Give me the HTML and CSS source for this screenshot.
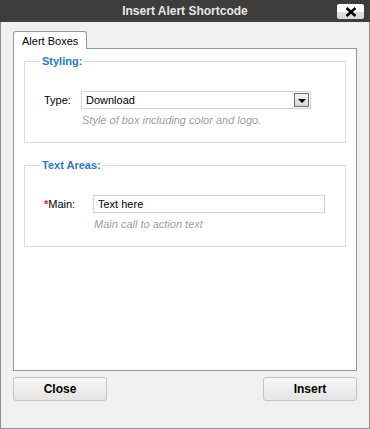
FILE: index.html
```html
<!DOCTYPE html>
<html lang="en">
<head>
    <meta charset="UTF-8">
    <title>Insert Alert Shortcode</title>
    <link rel="stylesheet" href="styles.css">
</head>
<body>
    <div class="dialog">
        <div class="titlebar">
            <span></span>
            <span class="title">Insert Alert Shortcode</span>
            <button class="close-x" type="button" title="Close">
                <svg width="12" height="10" viewBox="0 0 12 10">
                    <path d="M1.5 1 L10.5 9 M10.5 1 L1.5 9" stroke="#000" stroke-width="2.4" fill="none"/>
                </svg>
            </button>
        </div>

        <div class="window-body">
            <div class="tabs">
                <span class="tab active">Alert Boxes</span>
            </div>

            <div class="panel">
                <fieldset>
                    <legend>Styling:</legend>
                    <div class="field-row">
                        <label class="field-label">Type:</label>
                        <div class="field">
                            <div class="select">
                                <span class="select-value">Download</span>
                                <span class="select-arrow"></span>
                            </div>
                            <div class="hint">Style of box including color and logo.</div>
                        </div>
                    </div>
                </fieldset>

                <fieldset>
                    <legend>Text Areas:</legend>
                    <div class="field-row">
                        <label class="field-label wide" for="main"><span class="req">*</span>Main:</label>
                        <div class="field">
                            <input type="text" id="main" class="text-input" value="Text here">
                            <div class="hint">Main call to action text</div>
                        </div>
                    </div>
                </fieldset>
            </div>

            <div class="actions">
                <button type="button" class="btn">Close</button>
                <button type="button" class="btn">Insert</button>
            </div>
        </div>
    </div>
</body>
</html>
```

FILE: styles.css
```css
html, body {
    margin: 0;
    padding: 0;
}

body {
    font-family: "Liberation Sans", Arial, sans-serif;
    font-size: 11px;
    color: #000;
    width: 370px;
    height: 429px;
}

.dialog {
    display: flex;
    flex-direction: column;
    height: 429px;
}

.titlebar {
    height: 22px;
    background: #3d3d3d;
    display: grid;
    grid-template-columns: 1fr auto 1fr;
    align-items: center;
}

.title {
    color: #e6e6e6;
    font-weight: bold;
    font-size: 12px;
}

.close-x {
    justify-self: end;
    margin-right: 6px;
    margin-top: 1px;
    width: 27px;
    height: 15px;
    padding: 0;
    border: none;
    border-radius: 2px;
    background: linear-gradient(to bottom, #ffffff 0%, #ffffff 50%, #dedede 51%, #d8d8d8 100%);
    display: flex;
    align-items: center;
    justify-content: center;
}

.close-x svg {
    display: block;
}

.window-body {
    flex: 1;
    background: #f0f0f0;
    border: 1px solid #8f8f8f;
    border-top: none;
    padding: 9px 12px 0 12px;
}

.tabs {
    display: flex;
    height: 17px;
}

.tab {
    background: #fff;
    border: 1px solid #8a9ba6;
    border-bottom: none;
    border-radius: 3px 3px 0 0;
    padding: 3px 8px 0 8px;
    height: 18px;
    box-sizing: border-box;
    position: relative;
    z-index: 1;
    line-height: 13px;
    font-size: 11px;
}

.panel {
    background: #fff;
    border: 1px solid #8a9ba6;
    height: 315px;
    padding: 6px 10px 0 10px;
}

fieldset {
    border: 1px solid #dcdcdc;
    margin: 0 0 16px 0;
    padding: 0;
}

legend {
    color: #2b78c5;
    font-weight: bold;
    margin-left: 15px;
    padding: 0 2px;
}

.field-row {
    display: flex;
    align-items: flex-start;
    padding: 24px 0 16px 19px;
}

.field-label {
    width: 37px;
    padding-top: 3px;
}

.field-label.wide {
    width: 49px;
}

.req {
    color: #e02020;
    font-weight: bold;
}

.select {
    display: flex;
    align-items: center;
    width: 230px;
    height: 18px;
    box-sizing: border-box;
    border: 1px solid #d4d4d4;
    background: #fff;
}

.select-value {
    flex: 1;
    padding-left: 4px;
}

.select-arrow {
    width: 15px;
    height: 14px;
    margin-right: 1px;
    border: 1px solid #6f6f6f;
    box-sizing: border-box;
    background: linear-gradient(to bottom, #f4f4f4, #d8d8d8);
    display: flex;
    align-items: center;
    justify-content: center;
}

.select-arrow::after {
    content: "";
    border-left: 4px solid transparent;
    border-right: 4px solid transparent;
    border-top: 4px solid #000;
    margin-top: 1px;
}

.text-input {
    width: 232px;
    height: 18px;
    box-sizing: border-box;
    border: 1px solid #d4d4d4;
    padding: 0 4px;
    font-family: inherit;
    font-size: 11px;
    color: #000;
    outline: none;
}

.hint {
    color: #a0a0a0;
    font-style: italic;
    margin-top: 5px;
    padding-left: 1px;
}

.actions {
    display: flex;
    justify-content: space-between;
    margin-top: 6px;
}

.btn {
    width: 94px;
    height: 24px;
    border: 1px solid #c4c4c4;
    border-radius: 3px;
    background: linear-gradient(to bottom, #f7f7f7, #e4e4e4);
    font-family: inherit;
    font-size: 12px;
    font-weight: bold;
    color: #000;
}
```
